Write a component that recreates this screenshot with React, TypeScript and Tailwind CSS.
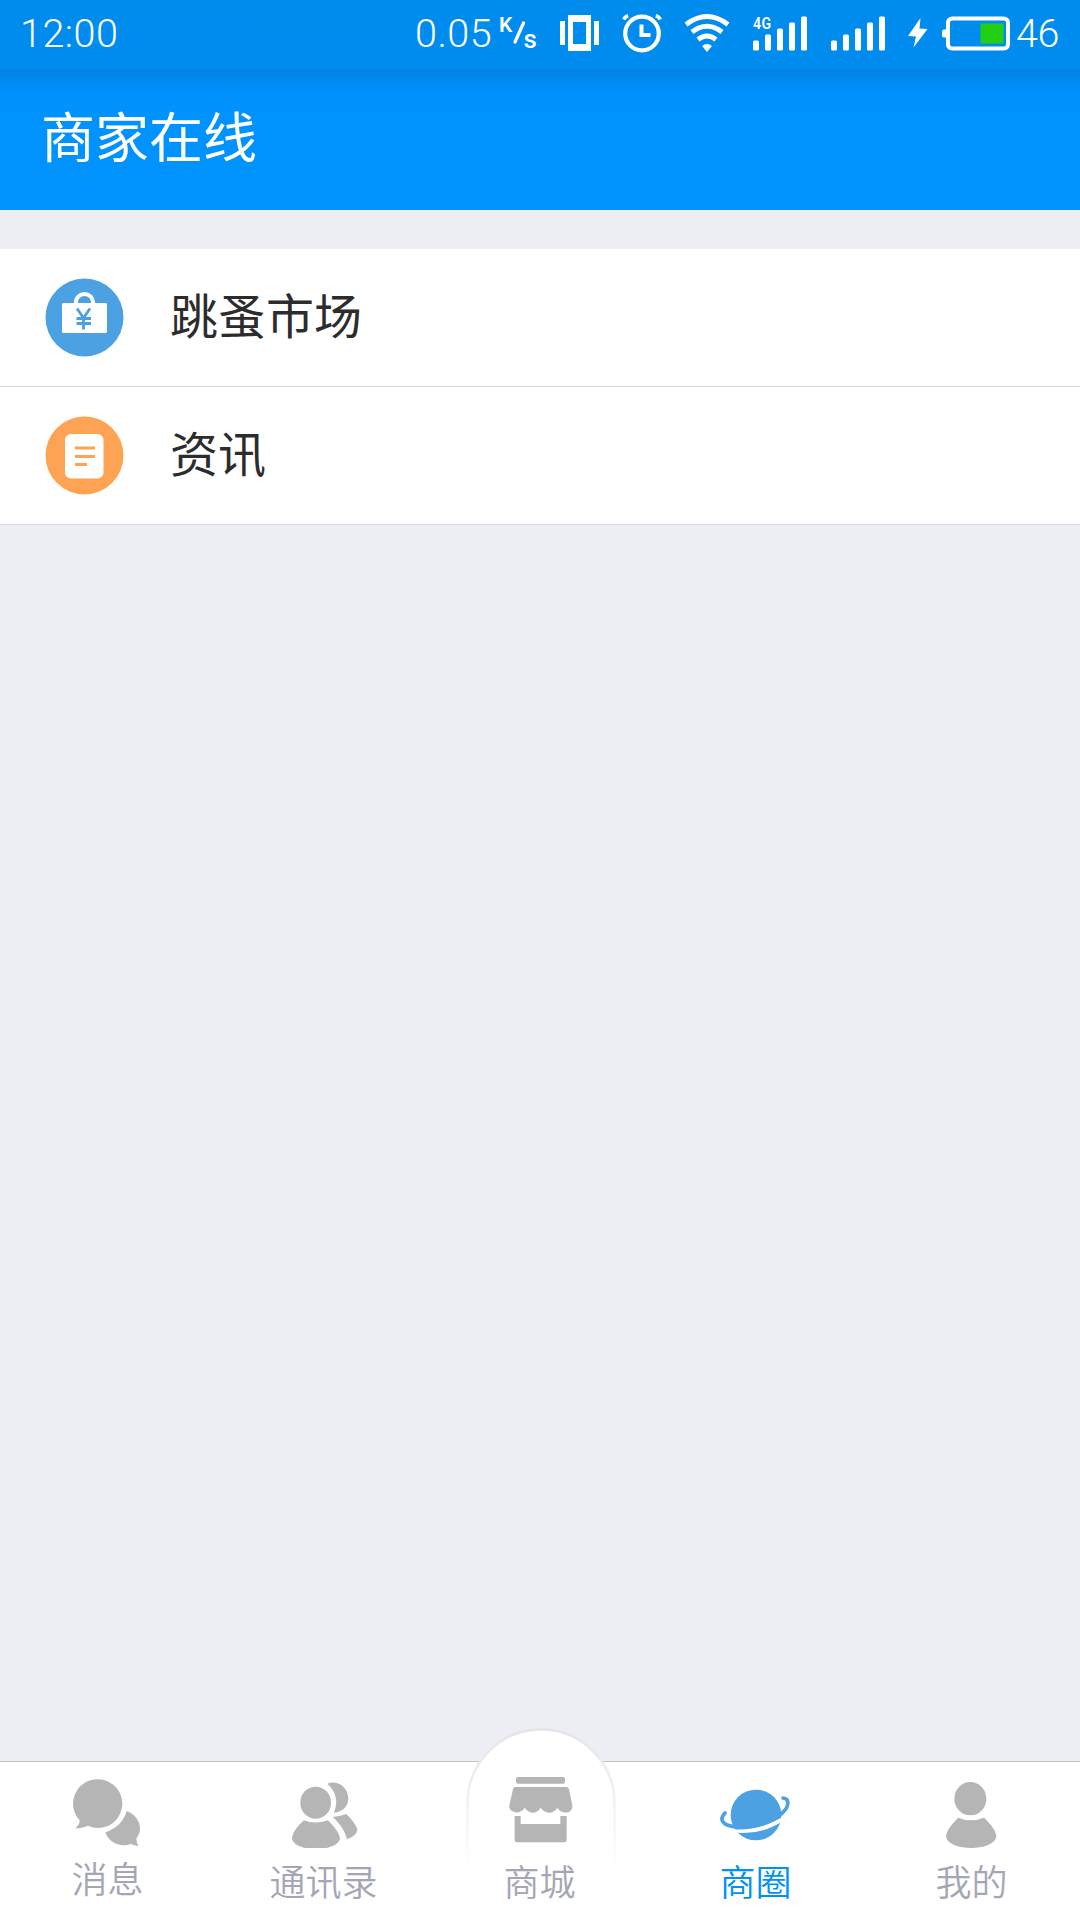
import type { ReactNode } from 'react';

interface MenuRowProps {
  icon: ReactNode;
  label: string;
}

interface TabProps {
  icon: ReactNode;
  label: string;
  active?: boolean;
  raised?: boolean;
}

function SpeedUnit() {
  return (
    <svg className="ml-[4px] h-[54px] w-[44px]" viewBox="-2 -8 44 54" fill="#fff">
      <text x="0" y="17.500" fontSize="21" fontWeight="600" fontFamily="Roboto, sans-serif">
        K
      </text>
      <text x="24.500" y="34" fontSize="26" fontWeight="500" fontFamily="Roboto, sans-serif">
        s
      </text>
      <path d="M16 28 24.500 9" stroke="#fff" strokeWidth="3.200" strokeLinecap="round" />
    </svg>
  );
}

function VibrateIcon() {
  return (
    <svg className="ml-[19px] h-9 w-[39px]" viewBox="0 0 39 36" fill="#fff">
      <path d="M0 6h5v24H0zM34 6h5v24h-5z" />
      <path fillRule="evenodd" d="M8 0h23v36H8zM13 7v22h13V7z" />
    </svg>
  );
}

function AlarmIcon() {
  return (
    <svg className="ml-[23px] h-[39px] w-[40px]" viewBox="0 0 40 39" fill="none" stroke="#fff">
      <circle cx="20" cy="19.500" r="16.800" strokeWidth="4.200" />
      <path d="M19.500 10.500v10.500h9" strokeWidth="4" />
      <path d="M1.800 5.500Q3 2.500 6.200 1.700M33.800 1.700Q37 2.500 38.200 5.500" strokeWidth="3.500" />
    </svg>
  );
}

function WifiIcon() {
  return (
    <svg className="ml-[22px] h-[39px] w-[46px]" viewBox="0 0 46 39" fill="none" stroke="#fff">
      <path d="M2 10.500Q23-5.500 44 10.500" strokeWidth="4.800" />
      <path d="M8 18Q23 6.500 38 18" strokeWidth="4.800" />
      <path d="M14 25.500Q23 18.500 32 25.500" strokeWidth="4.800" />
      <path d="M23 38l-5-6q5-4 10 0z" fill="#fff" stroke="none" />
    </svg>
  );
}

function SignalIcon({ network }: { network?: string }) {
  return (
    <svg className="ml-[21px] h-[51px] w-[57px]" viewBox="-2 -8 57 51" fill="#fff">
      {network ? (
        <text
          x="0"
          y="12.500"
          fontSize="17"
          fontWeight="600"
          fontFamily="Roboto, sans-serif"
          textLength="18.500"
          lengthAdjust="spacingAndGlyphs"
        >
          {network}
        </text>
      ) : null}
      <rect x="0" y="24.500" width="6" height="10" rx="1.500" />
      <rect x="12" y="18.500" width="6" height="16" rx="1.500" />
      <rect x="24" y="12.500" width="6" height="22" rx="1.500" />
      <rect x="36" y="6.500" width="6" height="28" rx="1.500" />
      <rect x="48" y="0.500" width="6" height="34" rx="1.500" />
    </svg>
  );
}

function BatteryIcon() {
  return (
    <svg className="ml-[14px] h-[35px] w-[69px]" viewBox="0 0 69 35">
      <rect x="0" y="13.500" width="7" height="8" rx="2" fill="#fff" />
      <rect x="6" y="2.500" width="60" height="30" rx="4" fill="none" stroke="#fff" strokeWidth="4" />
      <rect x="38.500" y="7.500" width="23" height="20" fill="#22d013" />
    </svg>
  );
}

function StatusBar() {
  return (
    <div className="flex h-[66px] items-center pl-[20px] font-[Roboto,sans-serif] text-[39.5px] leading-none font-light tracking-[0.5px] text-white">
      <span className="w-[395px] pt-0.5">12:00</span>
      <span className="w-[78px] pt-0.5">0.05</span>
      <SpeedUnit />
      <VibrateIcon />
      <AlarmIcon />
      <WifiIcon />
      <SignalIcon network="4G" />
      <SignalIcon />
      <svg className="ml-[22px] h-[30px] w-5" viewBox="0 0 20 30" fill="#fff">
        <path d="M12.500 0 0 18l8 .500L5.500 29.500 19.500 11l-8-.500z" />
      </svg>
      <BatteryIcon />
      <span className="ml-[5px] pt-0.5 tracking-[-0.3px]">46</span>
    </div>
  );
}

function MarketIcon() {
  return (
    <svg className="h-[79px] w-[79px]" viewBox="0 0 79 79">
      <circle cx="39.500" cy="39.500" r="39" fill="#4ba1e2" />
      <rect x="17" y="25" width="45" height="30" rx="1.500" fill="#fff" />
      <path d="M31 25.500v-1.500a8.500 8 0 0 1 17 0v1.500" fill="none" stroke="#fff" strokeWidth="4" />
      <path
        d="M32 30.500 38.500 40v11.500M45 30.500 38.500 40M31.500 40.500h14.500M31.500 45.500h14.500"
        fill="none"
        stroke="#4ba1e2"
        strokeWidth="2.800"
      />
    </svg>
  );
}

function NewsIcon() {
  return (
    <svg className="h-[79px] w-[79px]" viewBox="0 0 79 79">
      <circle cx="39.500" cy="39.500" r="39" fill="#fea253" />
      <rect x="20" y="18" width="38.500" height="44.500" rx="6" fill="#fff" />
      <path d="M30 32h20M30 40.500h20M30 48.500h12" stroke="#fea253" strokeWidth="2.800" />
    </svg>
  );
}

function MessageIcon() {
  return (
    <svg className="h-[72px] w-[72px]" viewBox="126 108 216 216" fill="#b5b5b5">
      <path d="M204 118a72 73 0 1 1-30 139q-14 7-38 8 14-12 13-24A73 73 0 0 1 204 118z" />
      <path d="M290 213c24 9 40 29 40 53 0 13-5 22-11 29q0 12 6 23-13-1-22-6c-32 11-66-3-77-35 30-10 56-32 64-64z" />
    </svg>
  );
}

function ContactsIcon() {
  return (
    <svg className="h-[72px] w-[72px]" viewBox="114 108 216 216" fill="#b5b5b5">
      <ellipse cx="197" cy="188" rx="46" ry="48" />
      <path d="M162 241q34 13 71 0c17 16 36 38 37 56-11 40-134 40-144 0 1-20 17-39 36-56z" />
      <path d="M232 131c29-13 62 9 63 44 0 25-18 42-43 43 14-34 6-64-20-87z" />
      <path d="M248 231q18-1 40-9c15 13 32 33 34 48q-3 18-31 28c-7-28-23-49-43-67z" />
    </svg>
  );
}

function ShopIcon() {
  return (
    <svg className="h-[72px] w-[72px]" viewBox="192 198 216 216" fill="#b5b5b5">
      <rect x="228" y="201" width="147" height="20" rx="6" />
      <path d="M225 231h154q6 0 8 7l9 44c8 27-28 36-44 11-12 20-36 20-50 0-12 20-34 20-48 0-14 25-54 14-45-11l10-44q2-7 6-7z" />
      <path d="M224 318h18v24h119v-24h19v72q0 7-7 7H231q-7 0-7-7z" />
    </svg>
  );
}

function PlanetIcon() {
  return (
    <svg className="h-[72px] w-[72px]" viewBox="150 108 216 216">
      <circle cx="258" cy="225" r="76" fill="#4ba1e2" />
      <path d="M172 266q90 14 176-42v12q-75 55-165 40z" fill="#fff" />
      <path
        d="M165 219c-22 24-1 41 41 42 53 0 105-17 132-43 19-19 22-41 1-44"
        fill="none"
        stroke="#4ba1e2"
        strokeWidth="11"
        strokeLinecap="round"
      />
    </svg>
  );
}

function ProfileIcon() {
  return (
    <svg className="h-[72px] w-[72px]" viewBox="168 108 216 216" fill="#b5b5b5">
      <ellipse cx="271" cy="176" rx="48" ry="50" />
      <path d="M235 233q37 16 77 0c21 20 36 39 37 57-9 45-142 45-151 0 1-18 17-37 37-57z" />
    </svg>
  );
}

function MenuRow({ icon, label }: MenuRowProps) {
  return (
    <li className="flex h-[138px] items-center border-b border-[#d9d9df] bg-white pb-px pl-[45px]">
      {icon}
      <span className="ml-[46px] pb-[8px] text-[48px] leading-none text-[#2c2c2c]">{label}</span>
    </li>
  );
}

function Tab({ icon, label, active, raised }: TabProps) {
  return (
    <a className={`relative flex flex-1 flex-col items-center pt-3.5 ${active ? 'text-[#0091f5]' : 'text-[#a4a6b6]'}`}>
      {icon}
      <span className={`pr-px text-[36px] leading-[54px] font-[350] ${raised ? 'mt-0.5' : 'mt-[5px]'}`}>{label}</span>
    </a>
  );
}

// White dome that rises above the tab bar behind the shop tab.
function TabDome() {
  return (
    <svg className="absolute -top-[42px] left-[456px] h-[180px] w-[170px]" viewBox="0 0 170 180">
      <defs>
        <linearGradient id="dome-edge" x1="0" y1="0" x2="0" y2="1">
          <stop offset="0" stopColor="#e4e4e9" />
          <stop offset="0.500" stopColor="#f2f2f4" />
          <stop offset="1" stopColor="#fff" />
        </linearGradient>
      </defs>
      <path d="M11.500 152V83a73.500 73.500 0 0 1 147 0v69" fill="#fff" stroke="url(#dome-edge)" strokeWidth="2.500" />
    </svg>
  );
}

export default function App() {
  return (
    <div className="flex h-[1920px] w-[1080px] flex-col overflow-hidden bg-[#edeef4] font-['Noto_Sans_CJK_SC',sans-serif]">
      <header className="h-[210px] bg-[#0092ff] bg-[linear-gradient(#008ced_0,#008cee_68px,#0085e5_70px,#0087e8_77px,#008bf3_82px,#0090fc_94px,#0092ff_106px)]">
        <StatusBar />
        <h1 className="pt-[42px] pl-[41px] text-[54px] leading-[54px] text-white">商家在线</h1>
      </header>

      <ul className="mt-[39px]">
        <MenuRow icon={<MarketIcon />} label="跳蚤市场" />
        <MenuRow icon={<NewsIcon />} label="资讯" />
      </ul>

      <nav className="relative mt-auto flex h-[159px] border-t border-[#c4c4c8] bg-white">
        <TabDome />
        <Tab icon={<MessageIcon />} label="消息" raised />
        <Tab icon={<ContactsIcon />} label="通讯录" />
        <Tab icon={<ShopIcon />} label="商城" />
        <Tab icon={<PlanetIcon />} label="商圈" active />
        <Tab icon={<ProfileIcon />} label="我的" />
      </nav>
    </div>
  );
}
